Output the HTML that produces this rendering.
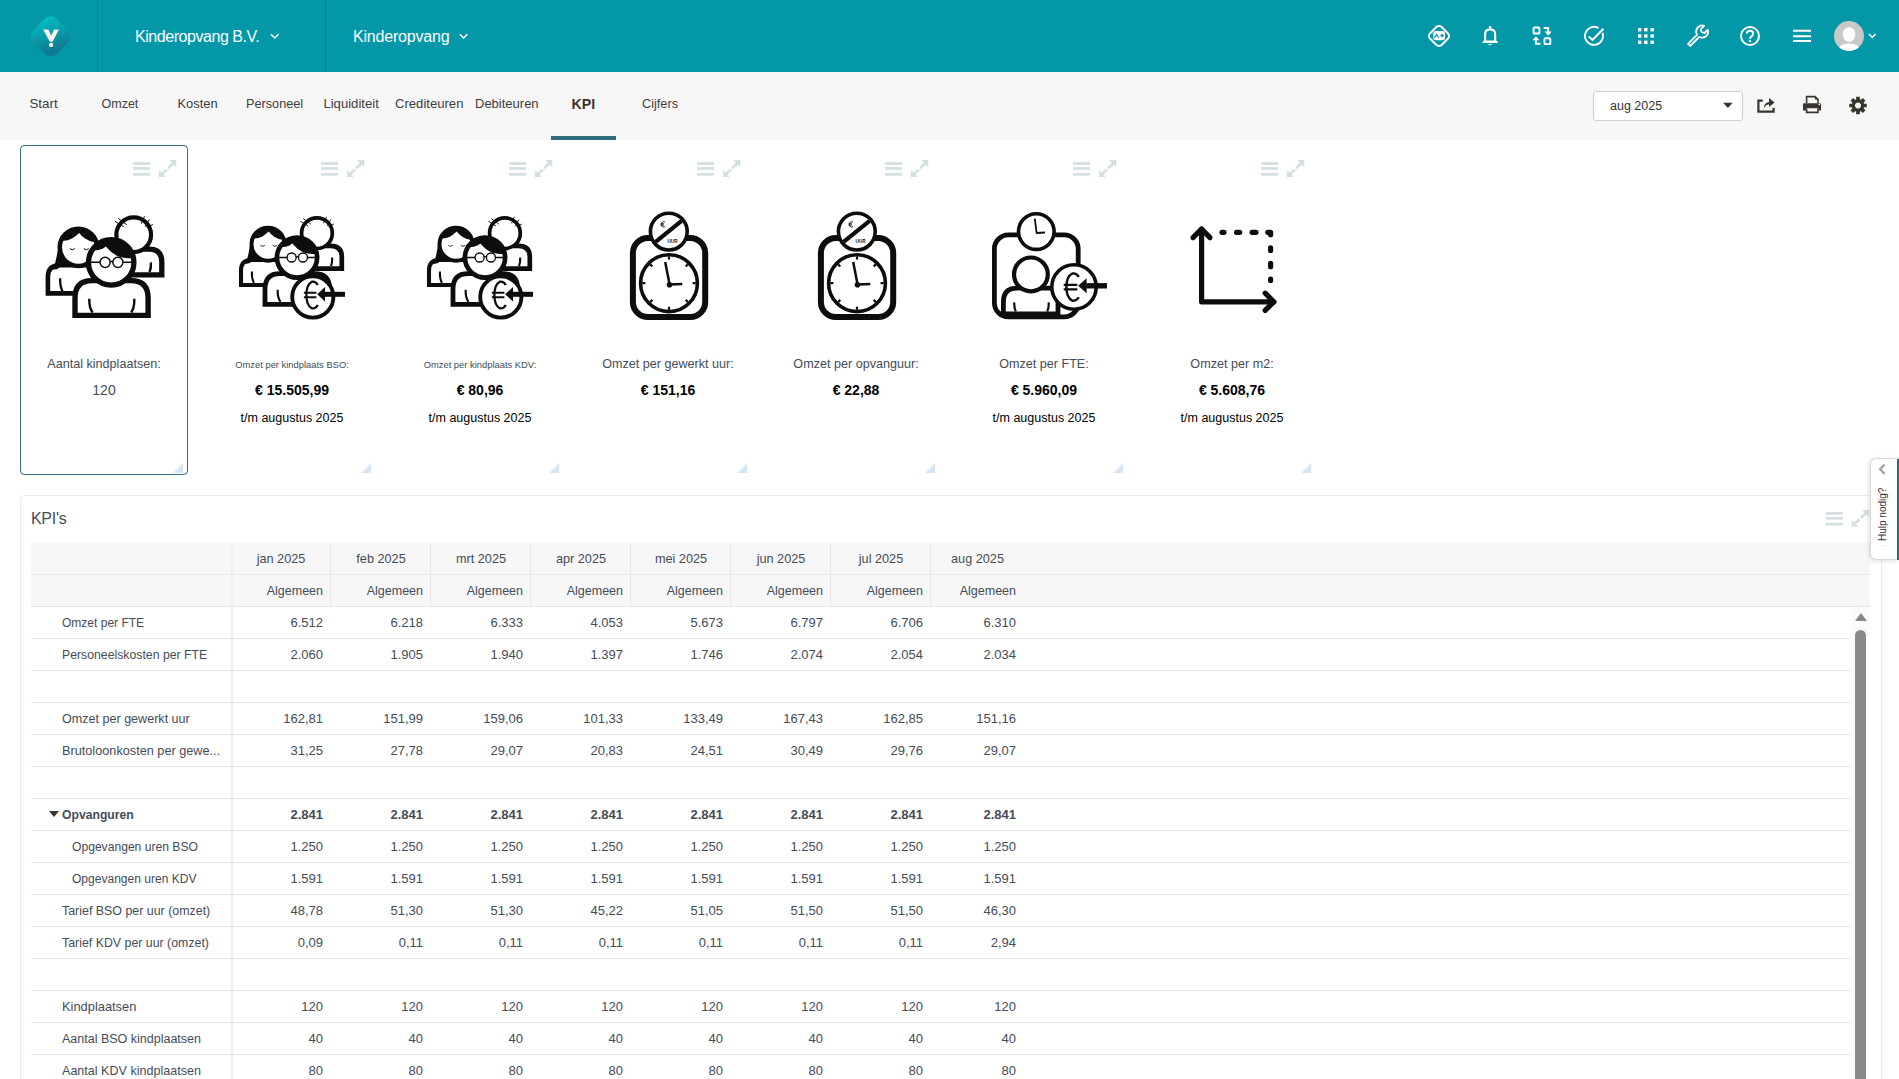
<!DOCTYPE html><html><head><meta charset="utf-8"><style>
html,body{margin:0;padding:0;width:1899px;height:1079px;overflow:hidden;background:#fff;font-family:"Liberation Sans",sans-serif;}
.a{position:absolute;white-space:nowrap}
#hdr{position:absolute;left:0;top:0;width:1899px;height:72px;background:#0397a8}
.sep{position:absolute;top:0;width:1px;height:72px;background:#087a8a}
.ht{position:absolute;top:27px;font-size:16px;line-height:20px;letter-spacing:-0.45px;color:#fff}
#sub{position:absolute;left:0;top:72px;width:1899px;height:68px;background:#f7f7f7}
.tab{position:absolute;top:97px;font-size:12.5px;line-height:15px;color:#3d3d3d}
.card{position:absolute;top:145px;width:168px;height:330px;box-sizing:border-box}
.ct{position:absolute;left:0;width:100%;text-align:center;white-space:nowrap}
.lab{top:357px;font-size:12.6px;line-height:15px;color:#454c56}
.labs{top:359px;font-size:9.4px;line-height:12px;color:#454c56}
.val{top:382px;font-size:14px;line-height:16px;font-weight:bold;color:#000}
.tm{top:411px;font-size:12.5px;line-height:15px;color:#000}
.tri{position:absolute;width:0;height:0;border-style:solid;border-width:0 0 9px 9px;border-color:transparent transparent #cfe0ea transparent}
.tl{position:absolute;font-size:12.3px;line-height:15px;color:#454c56}
.tn{position:absolute;font-size:13px;line-height:15px;color:#454c56;text-align:right}
.hl{position:absolute;height:2px;background:#eeeeee}
</style></head><body>
<div id="hdr"></div>
<div class="sep" style="left:97px"></div><div class="sep" style="left:325px"></div>
<svg class="a" style="left:0;top:0" width="100" height="72" viewBox="0 0 100 72">
<defs><linearGradient id="lg" x1="0" y1="0" x2="1" y2="0.5"><stop offset="0" stop-color="#00c3c7"/><stop offset="1" stop-color="#107a91"/></linearGradient></defs>
<rect x="34.2" y="19.8" width="33" height="33" rx="8" ry="8" transform="rotate(45 50.7 36.3)" fill="url(#lg)"/>
<path d="M43.2 29.4 L48.4 29.4 L51.2 35.8 L54 29.4 L58.8 29.4 L53.3 40.6 Q51.2 43.3 49.1 40.6 Z" fill="#fbf6ee"/>
<circle cx="51.1" cy="44.9" r="2.1" fill="#fbf6ee"/>
</svg>
<svg class="a" style="left:260px;top:25px" width="230" height="22" viewBox="260 25 230 22">
<path d="M271 34.3 L274.8 38 L278.6 34.3" stroke="#fff" stroke-width="1.5" fill="none"/>
<path d="M459.8 34.3 L463.6 38 L467.4 34.3" stroke="#fff" stroke-width="1.5" fill="none"/>
</svg>

<div class="ht" style="left:135px">Kinderopvang B.V.</div>
<div class="ht" style="left:353px;letter-spacing:-0.2px">Kinderopvang</div>
<svg class="a" style="left:1400px;top:0" width="499" height="72" viewBox="1400 0 499 72">
<g fill="none" stroke="#fff" stroke-width="2">
 <!-- diamond robot -->
 <rect x="1430.8" y="27.8" width="16.4" height="16.4" rx="4" transform="rotate(45 1439 36)"/>
 <!-- bell -->
 <path d="M1485.1 41.5 L1485.1 34.5 Q1485.1 29.35 1490.1 29.35 Q1495.2 29.35 1495.2 34.5 L1495.2 41.5" stroke-width="2.1"/>
 <!-- exchange squares -->
 <rect x="1533.55" y="27.55" width="5.9" height="6" rx="0.9" stroke-width="1.9"/>
 <rect x="1544.45" y="38.25" width="5.9" height="5.9" rx="0.9" stroke-width="1.9"/>
 <path d="M1543.7 28 L1548.2 28 L1548.2 32" stroke-width="1.9"/>
 <path d="M1540.4 43.7 L1535.9 43.7 L1535.9 39.5" stroke-width="1.9"/>
 <!-- check circle -->
 <path d="M1598.54 28.08 A9 9 0 1 0 1602.5 32.9" stroke-width="1.9"/>
 <path d="M1588.7 36.4 L1592.5 39.9 L1603.4 28.8" stroke-width="2.1"/>
 <!-- wrench -->
 <path transform="translate(-2.2 -1)" d="M1690.2 44.8 L1699.2 35.8 Q1697.3 31.5 1700 28.4 Q1702.8 25.5 1706.3 26.8 L1702.8 30.3 L1703.8 33 L1706.6 34 L1710 30.6 Q1711 34.5 1708.4 37 Q1705.5 39.7 1701.4 38 L1692.4 47 Z" stroke-width="1.8" stroke-linejoin="round"/>
 <!-- help -->
 <circle cx="1750" cy="36" r="9"/>
 <path d="M1746.7 33.6 Q1747 30.7 1750 30.7 Q1753.1 30.7 1753.1 33.6 Q1753.1 35.3 1751.2 36.6 Q1749.9 37.6 1749.9 39" stroke-width="1.9"/>
 <!-- hamburger -->
 <path d="M1793 30.7 H1811 M1793 36.2 H1811 M1793 41 H1811"/>
 <!-- chevron -->
 <path d="M1869 34 L1872.3 37.4 L1875.6 34" stroke-width="1.5"/>
</g>
<g fill="#fff">
 <rect x="1433.2" y="31.1" width="11.8" height="9.2" rx="2.8"/>
 <path d="M1481.8 43.1 L1498.3 43.1 L1496.4 40.6 L1483.8 40.6 Z"/><path d="M1488 44.1 L1492.2 44.1 Q1490.1 46.6 1488 44.1 Z"/>
 <circle cx="1490.1" cy="27.3" r="1.25"/>
 <path d="M1544.6 31.4 L1551.8 31.4 L1548.2 35.7 Z"/>
 <path d="M1532.4 40.2 L1539.4 40.2 L1535.9 36.2 Z"/>
 <rect x="1748.8" y="40.1" width="2.3" height="1.9"/>
 <rect x="1638" y="28" width="3.4" height="3.4"/><rect x="1644.1" y="28" width="3.4" height="3.4"/><rect x="1650.5" y="28" width="3.4" height="3.4"/>
 <rect x="1638" y="34.3" width="3.4" height="3.4"/><rect x="1644.1" y="34.3" width="3.4" height="3.4"/><rect x="1650.5" y="34.3" width="3.4" height="3.4"/>
 <rect x="1638" y="40.6" width="3.4" height="3.4"/><rect x="1644.1" y="40.6" width="3.4" height="3.4"/><rect x="1650.5" y="40.6" width="3.4" height="3.4"/>
</g>
<g fill="none" stroke="#0397a8" stroke-width="1.2">
 <path d="M1434.3 37.8 L1436.6 34.3 L1438.7 37.8"/>
</g>
<circle cx="1442.1" cy="35.5" r="1.55" fill="#0397a8"/>
<circle cx="1849" cy="36" r="15" fill="#c8c8c8"/>
<clipPath id="avc"><circle cx="1849" cy="36" r="15"/></clipPath>
<g fill="#fff" clip-path="url(#avc)">
 <ellipse cx="1849" cy="34.5" rx="6.3" ry="7.3"/>
 <ellipse cx="1849" cy="51.5" rx="12" ry="8"/>
</g>
</svg>

<div id="sub"></div>
<div class="tab" style="left:29.4px;top:96px;font-size:13.40px">Start</div>
<div class="tab" style="left:101.5px;top:97px;font-size:12.50px">Omzet</div>
<div class="tab" style="left:177.5px;top:96px;font-size:12.90px">Kosten</div>
<div class="tab" style="left:246px;top:97px;font-size:12.69px">Personeel</div>
<div class="tab" style="left:323.4px;top:96px;font-size:13.12px">Liquiditeit</div>
<div class="tab" style="left:395px;top:96px;font-size:13.10px">Crediteuren</div>
<div class="tab" style="left:475px;top:96px;font-size:13.01px">Debiteuren</div>
<div class="tab" style="left:642px;top:96px;font-size:12.72px">Cijfers</div>
<div class="tab" style="left:571.6px;top:97px;font-weight:bold;font-size:14.2px;color:#3b352e">KPI</div>
<div class="a" style="left:551px;top:136px;width:65px;height:4px;background:#2f6d7d"></div>
<div class="a" style="left:1593px;top:91px;width:148px;height:28px;border:1px solid #cfcfcf;border-radius:3px;background:#fff"></div>
<div class="tab" style="left:1610px;top:99px;font-size:12.5px;color:#333">aug 2025</div>
<svg class="a" style="left:1700px;top:80px" width="199" height="50" viewBox="1700 80 199 50">
<path d="M1723.1 102.8 L1732.7 102.8 L1727.9 108 Z" fill="#38362c"/>
<g fill="none" stroke="#38362c" stroke-width="2.2">
 <path d="M1762.7 100.6 L1758.4 100.6 L1758.4 111.7 L1773.6 111.7 L1773.6 107.8"/>
</g>
<path d="M1763.8 108.5 Q1763.8 102.8 1769 102 L1769 98 L1774.6 102.6 L1769 107 L1769 104.2 Q1765.5 104.5 1763.8 108.5 Z" fill="#38362c"/>
<g fill="#38362c">
 <path d="M1803 104.5 Q1803 103.2 1804.3 103.2 L1819.7 103.2 Q1821 103.2 1821 104.5 L1821 110.4 L1818.6 110.4 L1818.6 108.3 L1806 108.3 L1806 110.4 L1803 110.4 Z"/>
</g>
<g fill="none" stroke="#38362c" stroke-width="1.6">
 <path d="M1806.6 103 L1806.6 96.6 L1815 96.6 L1818 99.6 L1818 103"/>
 <path d="M1806.6 108.5 L1806.6 112.4 L1818 112.4 L1818 108.5"/>
</g>
<path d="M1815 96.6 L1818 99.6 L1815 99.6 Z" fill="#38362c"/>
<circle cx="1819.3" cy="104.6" r="0.8" fill="#fff"/>
<g transform="translate(1858 105.5)">
 <path fill="#38362c" fill-rule="evenodd" d="M-1.87 -6.12 L-1.85 -8.71 L1.85 -8.71 L1.87 -6.12 L3.00 -5.65 L4.85 -7.46 L7.46 -4.85 L5.65 -3.00 L6.12 -1.87 L8.71 -1.85 L8.71 1.85 L6.12 1.87 L5.65 3.00 L7.46 4.85 L4.85 7.46 L3.00 5.65 L1.87 6.12 L1.85 8.71 L-1.85 8.71 L-1.87 6.12 L-3.00 5.65 L-4.85 7.46 L-7.46 4.85 L-5.65 3.00 L-6.12 1.87 L-8.71 1.85 L-8.71 -1.85 L-6.12 -1.87 L-5.65 -3.00 L-7.46 -4.85 L-4.85 -7.46 L-3.00 -5.65 Z M0 -3.1 A3.1 3.1 0 1 0 0.01 -3.1 Z"/>
</g>
</svg>

<div class="card" style="left:20px">

</div>
<div class="ct lab" style="left:20px;width:168px;position:absolute">Aantal kindplaatsen:</div>
<div class="ct lab" style="left:20px;width:168px;top:383px;color:#454c56;font-size:14px">120</div>
<div class="card" style="left:208px">

</div>
<div class="ct labs" style="left:208px;width:168px;position:absolute">Omzet per kindplaats BSO:</div>
<div class="ct val" style="left:208px;width:168px">€ 15.505,99</div>
<div class="ct tm" style="left:208px;width:168px">t/m augustus 2025</div>
<div class="card" style="left:396px">

</div>
<div class="ct labs" style="left:396px;width:168px;position:absolute">Omzet per kindplaats KDV:</div>
<div class="ct val" style="left:396px;width:168px">€ 80,96</div>
<div class="ct tm" style="left:396px;width:168px">t/m augustus 2025</div>
<div class="card" style="left:584px">

</div>
<div class="ct lab" style="left:584px;width:168px;position:absolute">Omzet per gewerkt uur:</div>
<div class="ct val" style="left:584px;width:168px">€ 151,16</div>
<div class="card" style="left:772px">

</div>
<div class="ct lab" style="left:772px;width:168px;position:absolute">Omzet per opvanguur:</div>
<div class="ct val" style="left:772px;width:168px">€ 22,88</div>
<div class="card" style="left:960px">

</div>
<div class="ct lab" style="left:960px;width:168px;position:absolute">Omzet per FTE:</div>
<div class="ct val" style="left:960px;width:168px">€ 5.960,09</div>
<div class="ct tm" style="left:960px;width:168px">t/m augustus 2025</div>
<div class="card" style="left:1148px">

</div>
<div class="ct lab" style="left:1148px;width:168px;position:absolute">Omzet per m2:</div>
<div class="ct val" style="left:1148px;width:168px">€ 5.608,76</div>
<div class="ct tm" style="left:1148px;width:168px">t/m augustus 2025</div>
<div class="a" style="left:20px;top:145px;width:166px;height:328px;border:1px solid #336f80;border-radius:4px"></div>
<svg class="a" style="left:0;top:140px" width="1400" height="200" viewBox="0 140 1400 200">
<defs><g id="ppl"><path d="M122 274.8 L161.8 274.8 L161.8 262 Q161.8 249.2 149 249.2 L122 249.2 Z" fill="#fff" stroke="#0d0d0d" stroke-width="5.3"/>
<path d="M150.9 262.3 Q151.3 268 149.6 272" fill="none" stroke="#0d0d0d" stroke-width="2.4"/>
<circle cx="133.7" cy="234.8" r="17.35" fill="#fff" stroke="#0d0d0d" stroke-width="4.2"/>
<path d="M118.2 218.4 L126.7 224.6" stroke="#0d0d0d" stroke-width="1.0"/>
<path d="M115.0 221.4 L123.7 226.7" stroke="#0d0d0d" stroke-width="1.0"/>
<path d="M144.5 216.3 L141.2 223.7" stroke="#0d0d0d" stroke-width="1.0"/>
<path d="M149.5 219.4 L145.1 226.7" stroke="#0d0d0d" stroke-width="1.0"/>
<path d="M152.8 224.5 L146.8 227.5" stroke="#0d0d0d" stroke-width="1.0"/>
<path d="M100 293.4 L47.9 293.4 L47.9 277 Q47.9 265.2 59.5 265.2 L100 265.2 Z" fill="#fff" stroke="#0d0d0d" stroke-width="4.6"/>
<path d="M60.2 278.2 Q59.8 286 62.5 291.2" fill="none" stroke="#0d0d0d" stroke-width="2.3"/>
<path d="M57.8 250 Q56.5 258 55 263.5 Q51.5 266 52.5 269.2 Q57 270.5 60.5 266.5 Q65 264 69 262 L62 254 Z" fill="#0d0d0d"/>
<circle cx="78.4" cy="247.3" r="18.65" fill="#fff" stroke="#0d0d0d" stroke-width="4.5"/>
<clipPath id="wh"><circle cx="78.4" cy="247.3" r="18.7"/></clipPath>
<path d="M56 225 L56 241 Q58 241.5 62.5 241 Q68 240.6 72 238.5 Q76.5 235.6 79.2 232.9 Q82 236.6 85 238.6 Q89.5 241.6 95 242.4 L101 242.4 L101 225 Z" fill="#0d0d0d" clip-path="url(#wh)"/>
<path d="M69.8 248.6 Q72.2 251 74.8 248.6 M83.8 248.6 Q86.2 251 88.8 248.6" fill="none" stroke="#0d0d0d" stroke-width="1"/>
<path d="M75 315.4 L75 298 Q75 280.6 92 280.6 L131 280.6 Q148.1 280.6 148.1 298 L148.1 315.4 Z" fill="#fff" stroke="#0d0d0d" stroke-width="5.4"/>
<path d="M89.3 298.8 Q89 307.5 92.5 312.5 M134.3 298.8 Q134.6 307.5 131.3 312.5" fill="none" stroke="#0d0d0d" stroke-width="2.4"/>
<circle cx="111.2" cy="262.4" r="22.7" fill="#fff" stroke="#0d0d0d" stroke-width="5.3"/>
<clipPath id="fh"><circle cx="111.2" cy="262.4" r="23"/></clipPath>
<path d="M86 235 L86 249.8 Q94 251 99.5 249.8 Q103.5 248.8 105.8 246.5 Q111 253 118 256.3 Q124 258.8 137 258.2 L137 235 Z" fill="#0d0d0d" clip-path="url(#fh)"/>
<g fill="none" stroke="#0d0d0d" stroke-width="1.5"><circle cx="105.1" cy="262.3" r="5.1"/><circle cx="117.9" cy="262.3" r="5.1"/><path d="M90 262.3 L100 262.3 M110.2 262 Q111.5 260.8 112.8 262 M123 262.3 L133 262.3"/></g></g></defs>
<use href="#ppl"/>
<g transform="translate(268 244.2) scale(0.885) translate(-78.4 -247.3)"><use href="#ppl"/></g>
<g id="c2"><circle cx="312.8" cy="297" r="20.6" fill="#fff" stroke="#0d0d0d" stroke-width="3.9"/>
<path d="M317.80 284.99 Q315.72 281.10 311.82 281.66 Q306.40 284.44 306.40 295.00 Q306.40 305.56 311.82 308.34 Q315.72 308.90 317.80 305.01" fill="none" stroke="#0d0d0d" stroke-width="2.22"/>
<path d="M303.90 292.78 L316.41 292.78 M303.90 297.22 L316.41 297.22" stroke="#0d0d0d" stroke-width="2.00"/>
<path d="M317.2 294.3 L325 287.1 L325 301.5 Z" fill="#0d0d0d"/>
<rect x="324.5" y="291.8" width="20.5" height="5" fill="#0d0d0d"/></g>
<g transform="translate(188 0)"><use href="#ppl" transform="translate(268 244.2) scale(0.885) translate(-78.4 -247.3)"/><use href="#c2"/></g>
<g id="clk"><rect x="632.9" y="237.9" width="72.3" height="79" rx="15" fill="#fff" stroke="#0d0d0d" stroke-width="6"/>
<circle cx="668.8" cy="231.6" r="18.4" fill="#fff" stroke="#0d0d0d" stroke-width="3.6"/>
<path d="M655.6 241.8 L681.6 220.8" stroke="#0d0d0d" stroke-width="4.1"/>
<path d="M665 222.2 Q664.2 221.7 663.3 221.7 Q661.3 221.9 661.3 224.4 Q661.3 226.9 663.3 227.1 Q664.2 227.1 665 226.6 M660.6 223.8 L664 223.8 M660.6 225 L664 225" fill="none" stroke="#0d0d0d" stroke-width="0.9"/>
<text x="672.5" y="243.2" font-size="4.6" font-weight="bold" text-anchor="middle" fill="#0d0d0d" font-family="Liberation Sans">UUR</text>
<circle cx="669" cy="283.2" r="28.4" fill="#fff" stroke="#0d0d0d" stroke-width="3.6"/>
<path d="M669.00 256.60 L669.00 259.60 M687.81 264.39 L685.69 266.51 M695.60 283.20 L692.60 283.20 M687.81 302.01 L685.69 299.89 M669.00 309.80 L669.00 306.80 M650.19 302.01 L652.31 299.89 M642.40 283.20 L645.40 283.20 M650.19 264.39 L652.31 266.51" stroke="#0d0d0d" stroke-width="2.2"/>
<path d="M665.2 262 L669.6 284.5 L682.3 284" fill="none" stroke="#0d0d0d" stroke-width="2.5" stroke-linejoin="round"/>
<circle cx="669.5" cy="284.8" r="2.8" fill="#0d0d0d"/></g>
<use href="#clk" transform="translate(188 0)"/>
<rect x="994.4" y="234.9" width="83.8" height="82" rx="14" fill="#fff" stroke="#0d0d0d" stroke-width="4.8"/>
<circle cx="1036.3" cy="231.6" r="17.8" fill="#fff" stroke="#0d0d0d" stroke-width="3.6"/>
<path d="M1034.8 218.7 L1036.6 233 L1045 232.5" fill="none" stroke="#0d0d0d" stroke-width="1.8" stroke-linejoin="round"/>
<path d="M1003.4 314 L1003.4 302 Q1003.4 288.2 1017 288.2 L1058 288.2 L1058 314 Z" fill="#fff" stroke="#0d0d0d" stroke-width="4.8"/>
<path d="M1014.3 302.4 Q1014 308 1015.8 311.6 M1048.7 302.4 Q1049 308 1047.2 311.6" fill="none" stroke="#0d0d0d" stroke-width="2.2"/>
<circle cx="1030.9" cy="274.4" r="16.9" fill="#fff" stroke="#0d0d0d" stroke-width="4.2"/>
<circle cx="1074" cy="287" r="22.2" fill="#fff" stroke="#0d0d0d" stroke-width="3.6"/>
<path d="M1078.80 276.86 Q1076.53 272.90 1072.31 273.47 Q1066.42 276.30 1066.42 287.05 Q1066.42 297.80 1072.31 300.63 Q1076.53 301.20 1078.80 297.24" fill="none" stroke="#0d0d0d" stroke-width="2.42"/>
<path d="M1063.70 284.79 L1077.29 284.79 M1063.70 289.31 L1077.29 289.31" stroke="#0d0d0d" stroke-width="2.17"/>
<path d="M1078.2 285.8 L1086.6 278.3 L1086.6 293.3 Z" fill="#0d0d0d"/>
<rect x="1086.1" y="283.1" width="20.90000000000009" height="5.4" fill="#0d0d0d"/>
<g fill="none" stroke="#0d0d0d" stroke-width="5.2" stroke-linecap="round" stroke-linejoin="round">
<path d="M1201.6 229 L1201.6 301.8 L1273.8 301.8"/>
<path d="M1193 237.6 L1201.6 229 L1210 237.6"/>
<path d="M1265.2 293.2 L1273.8 301.8 L1265.2 310.4"/>
<path d="M1222 232.3 L1224 232.3 M1236.5 232.3 L1239.7 232.3 M1252.1 232.3 L1256 232.3 M1267.8 232.3 L1270.6 232.3 L1270.6 234.7 M1270.6 247.8 L1270.6 250.4 M1270.6 263.4 L1270.6 266.7 M1270.6 279.1 L1270.6 280.5"/>
</g>
</svg>
<div class="a" style="left:20px;top:495px;width:1860px;height:700px;border:1px solid #ececec;border-radius:4px"></div>
<div class="a" style="left:31px;top:509px;font-size:16px;line-height:20px;letter-spacing:-0.3px;color:#454c56">KPI's</div>
<div class="a" style="left:31px;top:543px;width:1839px;height:64px;background:#f7f7f7"></div>
<div class="hl" style="left:31px;top:574px;width:1839px;height:1px;background:#e9e9e9"></div>
<div class="hl" style="left:31px;top:606px;width:1839px;height:1px;background:#e6e6e6"></div>
<div class="a" style="left:330px;top:543px;width:1px;height:64px;background:#e8e8e8"></div>
<div class="a" style="left:430px;top:543px;width:1px;height:64px;background:#e8e8e8"></div>
<div class="a" style="left:530px;top:543px;width:1px;height:64px;background:#e8e8e8"></div>
<div class="a" style="left:630px;top:543px;width:1px;height:64px;background:#e8e8e8"></div>
<div class="a" style="left:730px;top:543px;width:1px;height:64px;background:#e8e8e8"></div>
<div class="a" style="left:830px;top:543px;width:1px;height:64px;background:#e8e8e8"></div>
<div class="a" style="left:930px;top:543px;width:1px;height:64px;background:#e8e8e8"></div>
<div class="a" style="left:231px;top:543px;width:2px;height:540px;background:#efefef"></div>
<div class="tn" style="left:231px;top:552px;width:100px;text-align:center;font-size:12.7px">jan 2025</div>
<div class="tn" style="left:231px;top:584px;width:92px;font-size:12.5px">Algemeen</div>
<div class="tn" style="left:331px;top:552px;width:100px;text-align:center;font-size:12.7px">feb 2025</div>
<div class="tn" style="left:331px;top:584px;width:92px;font-size:12.5px">Algemeen</div>
<div class="tn" style="left:431px;top:552px;width:100px;text-align:center;font-size:12.7px">mrt 2025</div>
<div class="tn" style="left:431px;top:584px;width:92px;font-size:12.5px">Algemeen</div>
<div class="tn" style="left:531px;top:552px;width:100px;text-align:center;font-size:12.7px">apr 2025</div>
<div class="tn" style="left:531px;top:584px;width:92px;font-size:12.5px">Algemeen</div>
<div class="tn" style="left:631px;top:552px;width:100px;text-align:center;font-size:12.7px">mei 2025</div>
<div class="tn" style="left:631px;top:584px;width:92px;font-size:12.5px">Algemeen</div>
<div class="tn" style="left:731px;top:552px;width:100px;text-align:center;font-size:12.7px">jun 2025</div>
<div class="tn" style="left:731px;top:584px;width:92px;font-size:12.5px">Algemeen</div>
<div class="tn" style="left:831px;top:552px;width:100px;text-align:center;font-size:12.7px">jul 2025</div>
<div class="tn" style="left:831px;top:584px;width:92px;font-size:12.5px">Algemeen</div>
<div class="tn" style="left:931px;top:552px;width:93px;text-align:center;font-size:12.7px">aug 2025</div>
<div class="tn" style="left:931px;top:584px;width:85px;font-size:12.5px">Algemeen</div>
<div class="hl" style="left:31px;top:638px;width:1820px;height:1px;background:#e8e8e8"></div>
<div class="tl" style="left:62px;top:616px;font-size:12.03px;">Omzet per FTE</div>
<div class="tn" style="left:231px;top:615px;width:92px;">6.512</div>
<div class="tn" style="left:331px;top:615px;width:92px;">6.218</div>
<div class="tn" style="left:431px;top:615px;width:92px;">6.333</div>
<div class="tn" style="left:531px;top:615px;width:92px;">4.053</div>
<div class="tn" style="left:631px;top:615px;width:92px;">5.673</div>
<div class="tn" style="left:731px;top:615px;width:92px;">6.797</div>
<div class="tn" style="left:831px;top:615px;width:92px;">6.706</div>
<div class="tn" style="left:931px;top:615px;width:85px;">6.310</div>
<div class="hl" style="left:31px;top:670px;width:1820px;height:1px;background:#e8e8e8"></div>
<div class="tl" style="left:62px;top:648px;font-size:12.28px;">Personeelskosten per FTE</div>
<div class="tn" style="left:231px;top:647px;width:92px;">2.060</div>
<div class="tn" style="left:331px;top:647px;width:92px;">1.905</div>
<div class="tn" style="left:431px;top:647px;width:92px;">1.940</div>
<div class="tn" style="left:531px;top:647px;width:92px;">1.397</div>
<div class="tn" style="left:631px;top:647px;width:92px;">1.746</div>
<div class="tn" style="left:731px;top:647px;width:92px;">2.074</div>
<div class="tn" style="left:831px;top:647px;width:92px;">2.054</div>
<div class="tn" style="left:931px;top:647px;width:85px;">2.034</div>
<div class="hl" style="left:31px;top:702px;width:1820px;height:1px;background:#e8e8e8"></div>
<div class="hl" style="left:31px;top:734px;width:1820px;height:1px;background:#e8e8e8"></div>
<div class="tl" style="left:62px;top:712px;font-size:12.57px;">Omzet per gewerkt uur</div>
<div class="tn" style="left:231px;top:711px;width:92px;">162,81</div>
<div class="tn" style="left:331px;top:711px;width:92px;">151,99</div>
<div class="tn" style="left:431px;top:711px;width:92px;">159,06</div>
<div class="tn" style="left:531px;top:711px;width:92px;">101,33</div>
<div class="tn" style="left:631px;top:711px;width:92px;">133,49</div>
<div class="tn" style="left:731px;top:711px;width:92px;">167,43</div>
<div class="tn" style="left:831px;top:711px;width:92px;">162,85</div>
<div class="tn" style="left:931px;top:711px;width:85px;">151,16</div>
<div class="hl" style="left:31px;top:766px;width:1820px;height:1px;background:#e8e8e8"></div>
<div class="tl" style="left:62px;top:743px;font-size:12.71px;">Brutoloonkosten per gewe...</div>
<div class="tn" style="left:231px;top:743px;width:92px;">31,25</div>
<div class="tn" style="left:331px;top:743px;width:92px;">27,78</div>
<div class="tn" style="left:431px;top:743px;width:92px;">29,07</div>
<div class="tn" style="left:531px;top:743px;width:92px;">20,83</div>
<div class="tn" style="left:631px;top:743px;width:92px;">24,51</div>
<div class="tn" style="left:731px;top:743px;width:92px;">30,49</div>
<div class="tn" style="left:831px;top:743px;width:92px;">29,76</div>
<div class="tn" style="left:931px;top:743px;width:85px;">29,07</div>
<div class="hl" style="left:31px;top:798px;width:1820px;height:1px;background:#e8e8e8"></div>
<div class="hl" style="left:31px;top:830px;width:1820px;height:1px;background:#e8e8e8"></div>
<div class="tl" style="left:62px;top:808px;font-size:12.18px;font-weight:bold;">Opvanguren</div>
<div class="a" style="left:49px;top:811px;width:0;height:0;border-left:5px solid transparent;border-right:5px solid transparent;border-top:6px solid #3b352e"></div>
<div class="tn" style="left:231px;top:807px;width:92px;font-weight:bold;">2.841</div>
<div class="tn" style="left:331px;top:807px;width:92px;font-weight:bold;">2.841</div>
<div class="tn" style="left:431px;top:807px;width:92px;font-weight:bold;">2.841</div>
<div class="tn" style="left:531px;top:807px;width:92px;font-weight:bold;">2.841</div>
<div class="tn" style="left:631px;top:807px;width:92px;font-weight:bold;">2.841</div>
<div class="tn" style="left:731px;top:807px;width:92px;font-weight:bold;">2.841</div>
<div class="tn" style="left:831px;top:807px;width:92px;font-weight:bold;">2.841</div>
<div class="tn" style="left:931px;top:807px;width:85px;font-weight:bold;">2.841</div>
<div class="hl" style="left:31px;top:862px;width:1820px;height:1px;background:#e8e8e8"></div>
<div class="tl" style="left:72px;top:840px;font-size:12.12px;">Opgevangen uren BSO</div>
<div class="tn" style="left:231px;top:839px;width:92px;">1.250</div>
<div class="tn" style="left:331px;top:839px;width:92px;">1.250</div>
<div class="tn" style="left:431px;top:839px;width:92px;">1.250</div>
<div class="tn" style="left:531px;top:839px;width:92px;">1.250</div>
<div class="tn" style="left:631px;top:839px;width:92px;">1.250</div>
<div class="tn" style="left:731px;top:839px;width:92px;">1.250</div>
<div class="tn" style="left:831px;top:839px;width:92px;">1.250</div>
<div class="tn" style="left:931px;top:839px;width:85px;">1.250</div>
<div class="hl" style="left:31px;top:894px;width:1820px;height:1px;background:#e8e8e8"></div>
<div class="tl" style="left:72px;top:872px;font-size:12.04px;">Opgevangen uren KDV</div>
<div class="tn" style="left:231px;top:871px;width:92px;">1.591</div>
<div class="tn" style="left:331px;top:871px;width:92px;">1.591</div>
<div class="tn" style="left:431px;top:871px;width:92px;">1.591</div>
<div class="tn" style="left:531px;top:871px;width:92px;">1.591</div>
<div class="tn" style="left:631px;top:871px;width:92px;">1.591</div>
<div class="tn" style="left:731px;top:871px;width:92px;">1.591</div>
<div class="tn" style="left:831px;top:871px;width:92px;">1.591</div>
<div class="tn" style="left:931px;top:871px;width:85px;">1.591</div>
<div class="hl" style="left:31px;top:926px;width:1820px;height:1px;background:#e8e8e8"></div>
<div class="tl" style="left:62px;top:904px;font-size:12.42px;">Tarief BSO per uur (omzet)</div>
<div class="tn" style="left:231px;top:903px;width:92px;">48,78</div>
<div class="tn" style="left:331px;top:903px;width:92px;">51,30</div>
<div class="tn" style="left:431px;top:903px;width:92px;">51,30</div>
<div class="tn" style="left:531px;top:903px;width:92px;">45,22</div>
<div class="tn" style="left:631px;top:903px;width:92px;">51,05</div>
<div class="tn" style="left:731px;top:903px;width:92px;">51,50</div>
<div class="tn" style="left:831px;top:903px;width:92px;">51,50</div>
<div class="tn" style="left:931px;top:903px;width:85px;">46,30</div>
<div class="hl" style="left:31px;top:958px;width:1820px;height:1px;background:#e8e8e8"></div>
<div class="tl" style="left:62px;top:936px;font-size:12.36px;">Tarief KDV per uur (omzet)</div>
<div class="tn" style="left:231px;top:935px;width:92px;">0,09</div>
<div class="tn" style="left:331px;top:935px;width:92px;">0,11</div>
<div class="tn" style="left:431px;top:935px;width:92px;">0,11</div>
<div class="tn" style="left:531px;top:935px;width:92px;">0,11</div>
<div class="tn" style="left:631px;top:935px;width:92px;">0,11</div>
<div class="tn" style="left:731px;top:935px;width:92px;">0,11</div>
<div class="tn" style="left:831px;top:935px;width:92px;">0,11</div>
<div class="tn" style="left:931px;top:935px;width:85px;">2,94</div>
<div class="hl" style="left:31px;top:990px;width:1820px;height:1px;background:#e8e8e8"></div>
<div class="hl" style="left:31px;top:1022px;width:1820px;height:1px;background:#e8e8e8"></div>
<div class="tl" style="left:62px;top:999px;font-size:12.87px;">Kindplaatsen</div>
<div class="tn" style="left:231px;top:999px;width:92px;">120</div>
<div class="tn" style="left:331px;top:999px;width:92px;">120</div>
<div class="tn" style="left:431px;top:999px;width:92px;">120</div>
<div class="tn" style="left:531px;top:999px;width:92px;">120</div>
<div class="tn" style="left:631px;top:999px;width:92px;">120</div>
<div class="tn" style="left:731px;top:999px;width:92px;">120</div>
<div class="tn" style="left:831px;top:999px;width:92px;">120</div>
<div class="tn" style="left:931px;top:999px;width:85px;">120</div>
<div class="hl" style="left:31px;top:1054px;width:1820px;height:1px;background:#e8e8e8"></div>
<div class="tl" style="left:62px;top:1032px;font-size:12.51px;">Aantal BSO kindplaatsen</div>
<div class="tn" style="left:231px;top:1031px;width:92px;">40</div>
<div class="tn" style="left:331px;top:1031px;width:92px;">40</div>
<div class="tn" style="left:431px;top:1031px;width:92px;">40</div>
<div class="tn" style="left:531px;top:1031px;width:92px;">40</div>
<div class="tn" style="left:631px;top:1031px;width:92px;">40</div>
<div class="tn" style="left:731px;top:1031px;width:92px;">40</div>
<div class="tn" style="left:831px;top:1031px;width:92px;">40</div>
<div class="tn" style="left:931px;top:1031px;width:85px;">40</div>
<div class="hl" style="left:31px;top:1086px;width:1820px;height:1px;background:#e8e8e8"></div>
<div class="tl" style="left:62px;top:1064px;font-size:12.57px;">Aantal KDV kindplaatsen</div>
<div class="tn" style="left:231px;top:1063px;width:92px;">80</div>
<div class="tn" style="left:331px;top:1063px;width:92px;">80</div>
<div class="tn" style="left:431px;top:1063px;width:92px;">80</div>
<div class="tn" style="left:531px;top:1063px;width:92px;">80</div>
<div class="tn" style="left:631px;top:1063px;width:92px;">80</div>
<div class="tn" style="left:731px;top:1063px;width:92px;">80</div>
<div class="tn" style="left:831px;top:1063px;width:92px;">80</div>
<div class="tn" style="left:931px;top:1063px;width:85px;">80</div>
<div class="a" style="left:1851px;top:607px;width:18px;height:480px;background:#fbfbfb"></div>
<div class="a" style="left:1855px;top:613px;width:0;height:0;border-left:6px solid transparent;border-right:6px solid transparent;border-bottom:8px solid #888"></div>
<div class="a" style="left:1855px;top:630px;width:11px;height:460px;background:#8a8a8a;border-radius:6px 6px 0 0"></div>
<svg class="a" style="left:0;top:140px" width="1899" height="400" viewBox="0 140 1899 400">
<rect x="133.1" y="162.2" width="17" height="2.7" fill="#d3dfe3"/>
<rect x="133.1" y="167.1" width="17" height="2.7" fill="#d3dfe3"/>
<rect x="133.1" y="173.0" width="17" height="2.7" fill="#d3dfe3"/>
<path d="M169.2 160.1 L176.2 160.1 L176.2 166.9 Z M159.0 170.29999999999998 L159.0 177.0 L165.8 177.0 Z" fill="#d3dfe3"/>
<path d="M173.5 163.0 L168.1 168.2 M161.5 174.5 L166.9 169.4" stroke="#d3dfe3" stroke-width="2.6"/>
<rect x="321.1" y="162.2" width="17" height="2.7" fill="#d3dfe3"/>
<rect x="321.1" y="167.1" width="17" height="2.7" fill="#d3dfe3"/>
<rect x="321.1" y="173.0" width="17" height="2.7" fill="#d3dfe3"/>
<path d="M357.2 160.1 L364.2 160.1 L364.2 166.9 Z M347.0 170.29999999999998 L347.0 177.0 L353.8 177.0 Z" fill="#d3dfe3"/>
<path d="M361.5 163.0 L356.1 168.2 M349.5 174.5 L354.9 169.4" stroke="#d3dfe3" stroke-width="2.6"/>
<rect x="509.1" y="162.2" width="17" height="2.7" fill="#d3dfe3"/>
<rect x="509.1" y="167.1" width="17" height="2.7" fill="#d3dfe3"/>
<rect x="509.1" y="173.0" width="17" height="2.7" fill="#d3dfe3"/>
<path d="M545.2 160.1 L552.2 160.1 L552.2 166.9 Z M535.0 170.29999999999998 L535.0 177.0 L541.8 177.0 Z" fill="#d3dfe3"/>
<path d="M549.5 163.0 L544.1 168.2 M537.5 174.5 L542.9 169.4" stroke="#d3dfe3" stroke-width="2.6"/>
<rect x="697.1" y="162.2" width="17" height="2.7" fill="#d3dfe3"/>
<rect x="697.1" y="167.1" width="17" height="2.7" fill="#d3dfe3"/>
<rect x="697.1" y="173.0" width="17" height="2.7" fill="#d3dfe3"/>
<path d="M733.2 160.1 L740.2 160.1 L740.2 166.9 Z M723.0 170.29999999999998 L723.0 177.0 L729.8 177.0 Z" fill="#d3dfe3"/>
<path d="M737.5 163.0 L732.1 168.2 M725.5 174.5 L730.9 169.4" stroke="#d3dfe3" stroke-width="2.6"/>
<rect x="885.1" y="162.2" width="17" height="2.7" fill="#d3dfe3"/>
<rect x="885.1" y="167.1" width="17" height="2.7" fill="#d3dfe3"/>
<rect x="885.1" y="173.0" width="17" height="2.7" fill="#d3dfe3"/>
<path d="M921.2 160.1 L928.2 160.1 L928.2 166.9 Z M911.0 170.29999999999998 L911.0 177.0 L917.8 177.0 Z" fill="#d3dfe3"/>
<path d="M925.5 163.0 L920.1 168.2 M913.5 174.5 L918.9 169.4" stroke="#d3dfe3" stroke-width="2.6"/>
<rect x="1073.1" y="162.2" width="17" height="2.7" fill="#d3dfe3"/>
<rect x="1073.1" y="167.1" width="17" height="2.7" fill="#d3dfe3"/>
<rect x="1073.1" y="173.0" width="17" height="2.7" fill="#d3dfe3"/>
<path d="M1109.2 160.1 L1116.2 160.1 L1116.2 166.9 Z M1099.0 170.29999999999998 L1099.0 177.0 L1105.8 177.0 Z" fill="#d3dfe3"/>
<path d="M1113.5 163.0 L1108.1 168.2 M1101.5 174.5 L1106.9 169.4" stroke="#d3dfe3" stroke-width="2.6"/>
<rect x="1261.1" y="162.2" width="17" height="2.7" fill="#d3dfe3"/>
<rect x="1261.1" y="167.1" width="17" height="2.7" fill="#d3dfe3"/>
<rect x="1261.1" y="173.0" width="17" height="2.7" fill="#d3dfe3"/>
<path d="M1297.2 160.1 L1304.2 160.1 L1304.2 166.9 Z M1287.0 170.29999999999998 L1287.0 177.0 L1293.8 177.0 Z" fill="#d3dfe3"/>
<path d="M1301.5 163.0 L1296.1 168.2 M1289.5 174.5 L1294.9 169.4" stroke="#d3dfe3" stroke-width="2.6"/>
<rect x="1825.8" y="512" width="17" height="2.7" fill="#d3dfe3"/>
<rect x="1825.8" y="516.9" width="17" height="2.7" fill="#d3dfe3"/>
<rect x="1825.8" y="522.8" width="17" height="2.7" fill="#d3dfe3"/>
<path d="M1861.9 509.9 L1868.9 509.9 L1868.9 516.6999999999999 Z M1851.7 520.1 L1851.7 526.8 L1858.5 526.8 Z" fill="#d3dfe3"/>
<path d="M1866.2 512.8 L1860.8 518.0 M1854.2 524.3 L1859.6000000000001 519.1999999999999" stroke="#d3dfe3" stroke-width="2.6"/>
<path d="M183 463.2 L183 473 L173.2 473 Z" fill="#d3e6f3"/>
<path d="M371 463.2 L371 473 L361.2 473 Z" fill="#d3e6f3"/>
<path d="M559 463.2 L559 473 L549.2 473 Z" fill="#d3e6f3"/>
<path d="M747 463.2 L747 473 L737.2 473 Z" fill="#d3e6f3"/>
<path d="M935 463.2 L935 473 L925.2 473 Z" fill="#d3e6f3"/>
<path d="M1123 463.2 L1123 473 L1113.2 473 Z" fill="#d3e6f3"/>
<path d="M1311 463.2 L1311 473 L1301.2 473 Z" fill="#d3e6f3"/>
</svg>
<div class="a" style="left:1870px;top:458px;width:29px;height:102px;box-sizing:border-box;background:#fff;border:1px solid #dadada;border-right:none;border-radius:6px 0 0 6px;box-shadow:-1px 1px 4px rgba(0,0,0,0.14)"></div>
<div class="a" style="left:1897px;top:459px;width:2px;height:101px;background:#2c6a7a"></div>
<svg class="a" style="left:1870px;top:458px" width="29" height="101" viewBox="1870 458 29 101">
<path d="M1884.6 464.6 L1880.2 469.3 L1884.6 474" fill="none" stroke="#a3a3a3" stroke-width="2.3"/>
<text transform="translate(1886.2 541) rotate(-90)" font-family="Liberation Sans" font-size="10" fill="#333">Hulp nodig?</text>
<path d="M1882.5 545.5 h0.6 M1884.2 545.5 h0.6 M1885.9 545.5 h0.6" stroke="#bbb" stroke-width="0.7"/>
</svg>

</body></html>
